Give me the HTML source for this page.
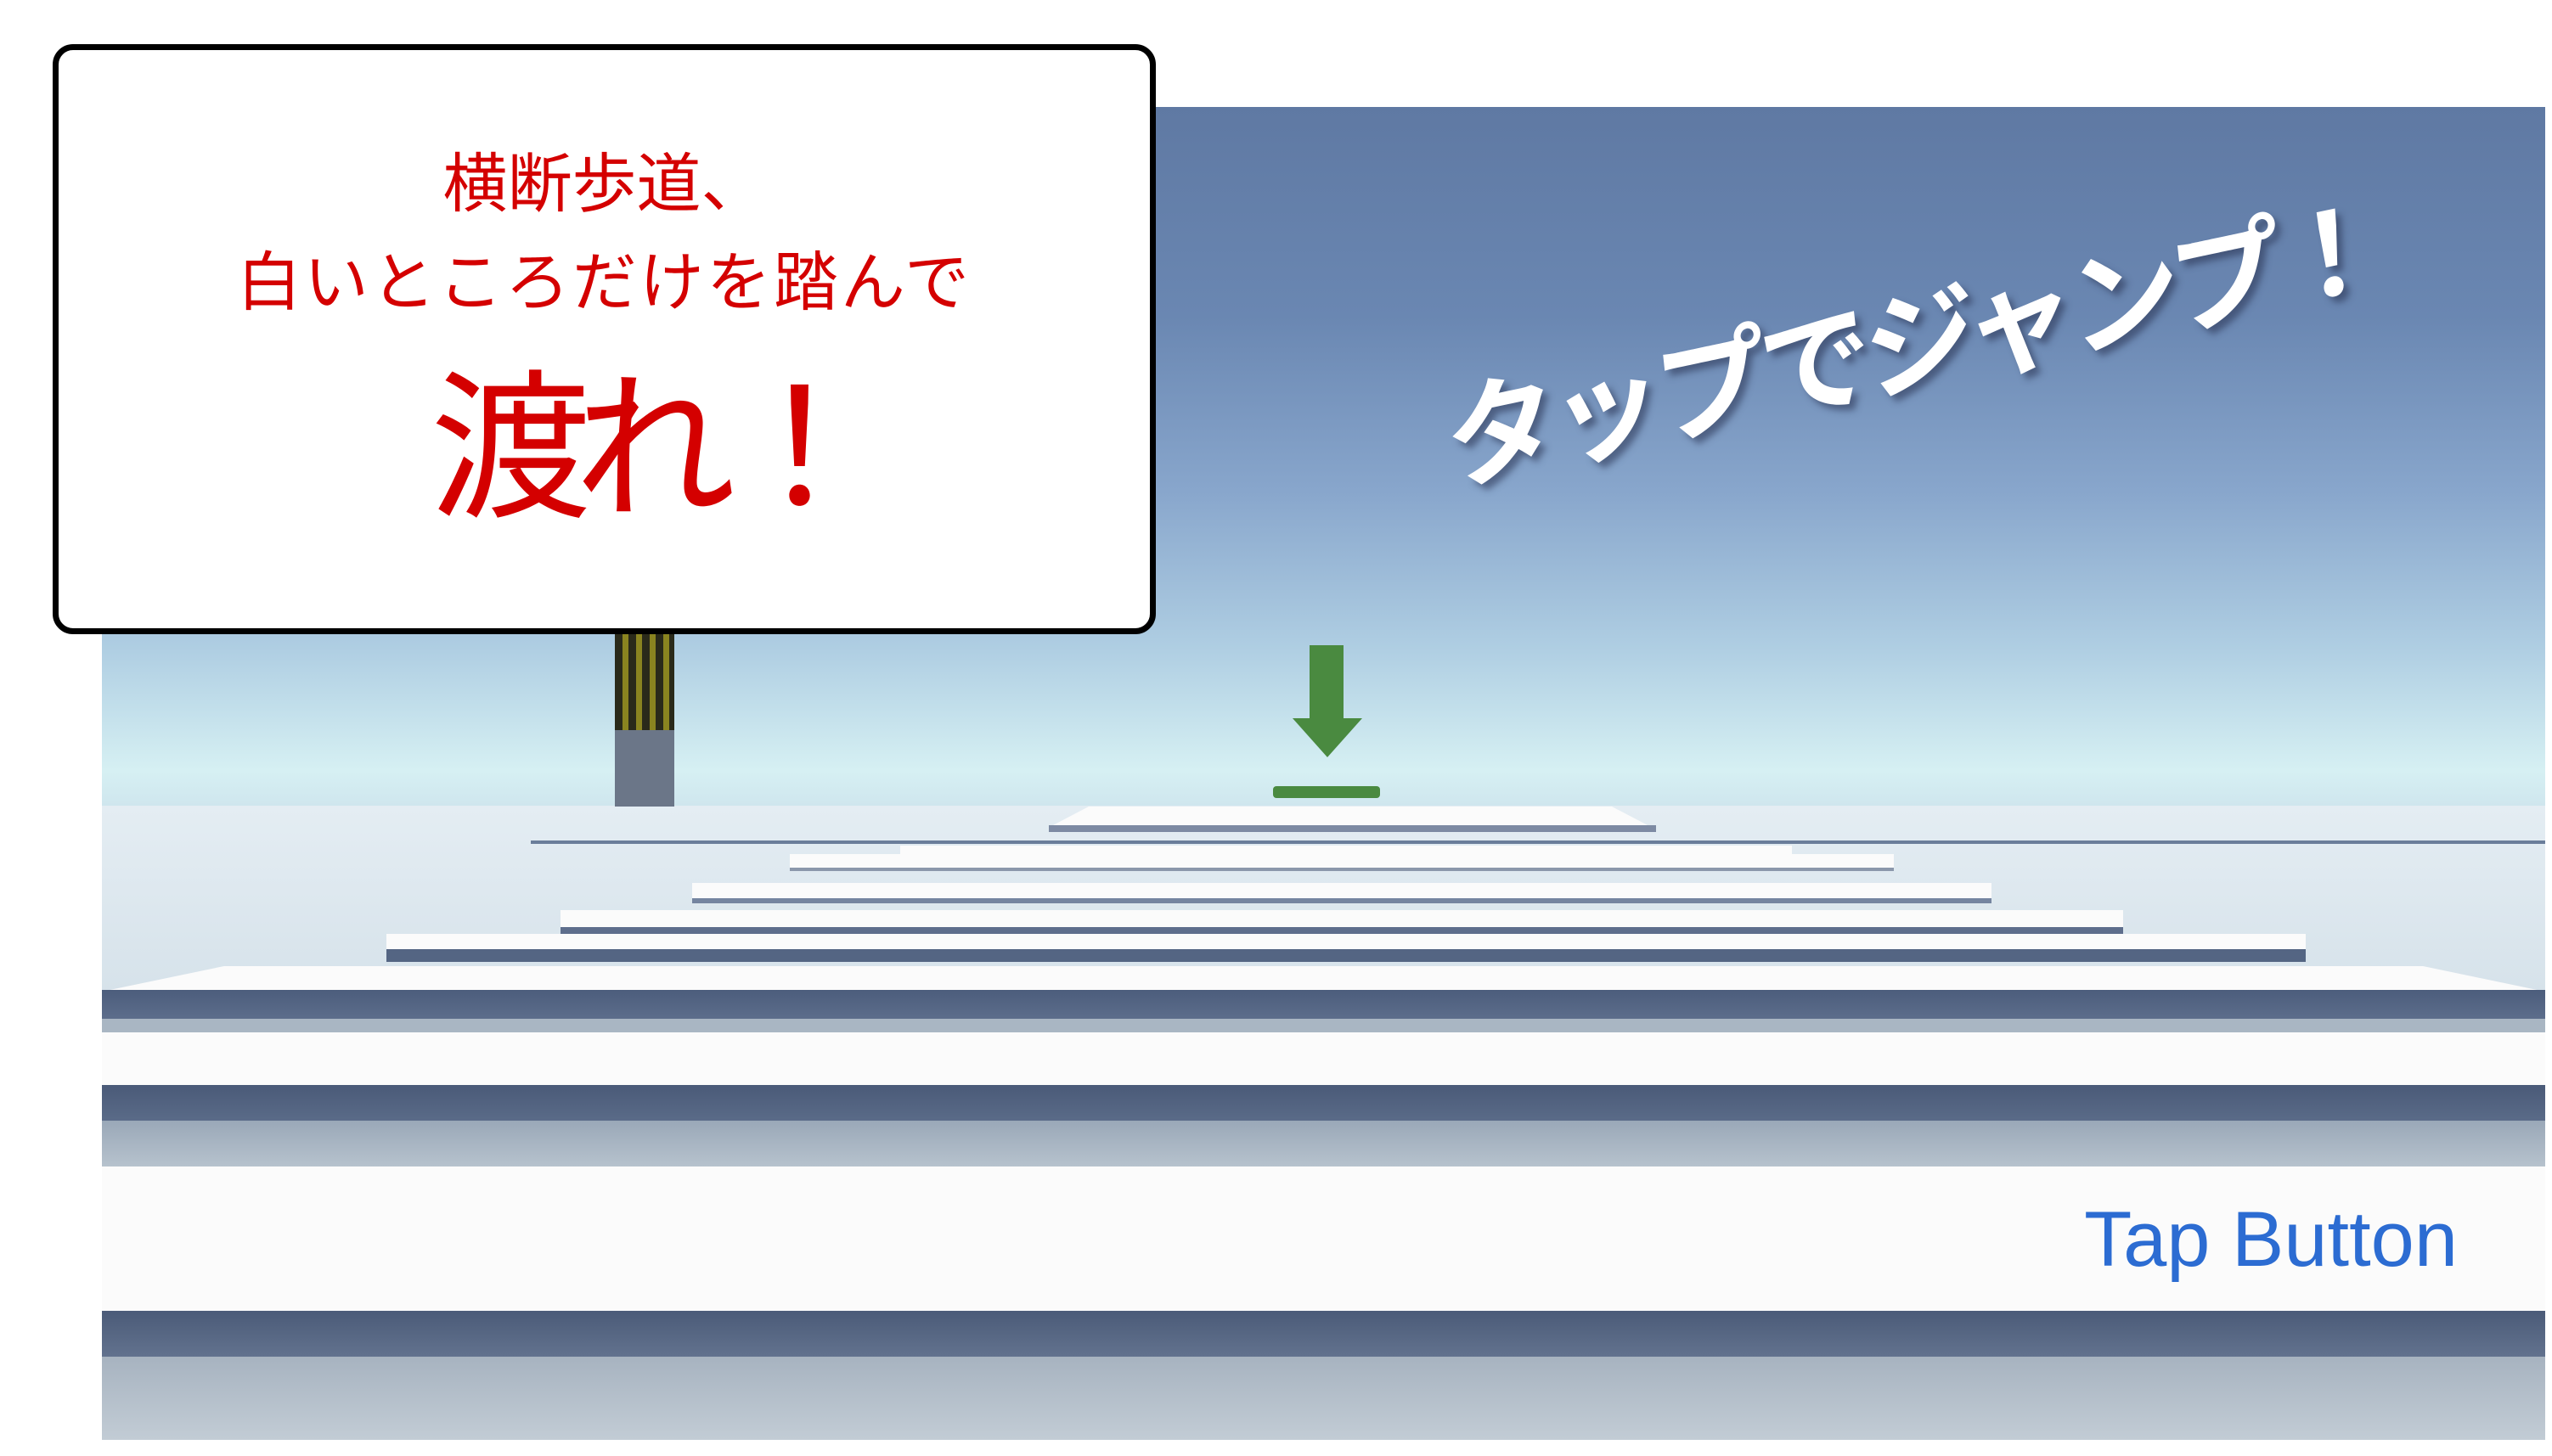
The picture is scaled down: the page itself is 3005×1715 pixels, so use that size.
<!DOCTYPE html>
<html><head><meta charset="utf-8"><style>
html,body{margin:0;padding:0}
body{width:3005px;height:1715px;position:relative;overflow:hidden;background:#fff;font-family:"Liberation Sans","Noto Sans CJK JP",sans-serif}
.a{position:absolute}
#sky{left:120px;top:126px;width:2877px;height:823px;background:linear-gradient(#5f79a3 0%,#6a87b2 30%,#88a6cc 55%,#b0cfe3 78%,#d6f0f3 95%,#cfe6ee 100%)}
#ground{left:120px;top:949px;width:2877px;height:747px;background:linear-gradient(#e4edf3,#d6e2ea 30%,#c9d6e0 60%,#b8c4cf 100%)}
.w{position:absolute;background:#fbfbfb}
.d{position:absolute;background:#4a5a78}
.g{position:absolute;background:#a9b6c3}
</style></head><body>
<div id="sky" class="a"></div>
<div id="ground" class="a"></div>
<div class="w" style="left:1240px;top:950px;width:700px;height:22px;clip-path:polygon(6% 0,94% 0,100% 100%,0 100%)"></div>
<div class="d" style="left:1235px;top:972px;width:715px;height:8px;background:#7d8aa3"></div>
<div class="d" style="left:625px;top:990px;width:2372px;height:4px;background:#6a7d9a"></div>
<div class="w" style="left:1060px;top:996px;width:1050px;height:12px"></div>
<div class="w" style="left:930px;top:1006px;width:1300px;height:16px"></div>
<div class="d" style="left:930px;top:1022px;width:1300px;height:4px;background:#8b97ab"></div>
<div class="w" style="left:815px;top:1040px;width:1530px;height:18px"></div>
<div class="d" style="left:815px;top:1058px;width:1530px;height:6px;background:#7585a0"></div>
<div class="w" style="left:660px;top:1072px;width:1840px;height:20px"></div>
<div class="d" style="left:660px;top:1092px;width:1840px;height:9px;background:#5e6e8c"></div>
<div class="w" style="left:455px;top:1100px;width:2260px;height:20px"></div>
<div class="d" style="left:455px;top:1118px;width:2260px;height:15px;background:#546583"></div>
<div class="w" style="left:120px;top:1138px;width:2877px;height:30px;clip-path:polygon(5% 0,95% 0,100% 100%,0 100%)"></div>
<div class="d" style="left:120px;top:1166px;width:2877px;height:38px;background:linear-gradient(#4c5d7c,#5e6f8d)"></div>
<div class="g" style="left:120px;top:1200px;width:2877px;height:16px"></div>
<div class="w" style="left:120px;top:1216px;width:2877px;height:62px"></div>
<div class="d" style="left:120px;top:1278px;width:2877px;height:42px;background:linear-gradient(#4a5a78,#5a6b88)"></div>
<div class="g" style="left:120px;top:1320px;width:2877px;height:54px;background:linear-gradient(#9aa8b8,#b6c2cd)"></div>
<div class="w" style="left:120px;top:1374px;width:2877px;height:170px"></div>
<div class="d" style="left:120px;top:1544px;width:2877px;height:54px;background:linear-gradient(#4b5b78,#62728e)"></div>
<div class="g" style="left:120px;top:1598px;width:2877px;height:98px;background:linear-gradient(#a7b3c0,#c2ccd5)"></div>
<div class="a" style="left:724px;top:720px;width:70px;height:230px;background:#6b7688"></div>
<div class="a" style="left:724px;top:720px;width:70px;height:140px;background:repeating-linear-gradient(90deg,#2a2a1a 0,#2a2a1a 9px,#8a8420 9px,#8a8420 16px)"></div>
<div class="a" style="left:1542px;top:760px;width:40px;height:92px;background:#4a8a40"></div>
<div class="a" style="left:1522px;top:846px;width:82px;height:46px;background:#4a8a40;clip-path:polygon(0 0,100% 0,50% 100%)"></div>
<div class="a" style="left:1499px;top:926px;width:126px;height:14px;background:#4a8a40;border-radius:4px"></div>
<div class="a" style="left:1690px;top:300px;width:1100px;text-align:center;font-size:134px;font-weight:bold;color:#fff;transform:rotate(-12deg) skewX(-6deg);text-shadow:6px 8px 8px rgba(40,50,80,.55);white-space:nowrap;letter-spacing:-8px">タップでジャンプ！</div>
<div class="a" style="left:62px;top:52px;width:1285px;height:681px;border:7px solid #000;border-radius:24px;background:#fff"></div>
<div class="a" style="left:62px;top:168px;width:1299px;text-align:center;color:#d40000;font-size:76px;line-height:100px">横断歩道、</div>
<div class="a" style="left:62px;top:284px;width:1299px;text-align:center;color:#d40000;font-size:76px;line-height:100px;letter-spacing:3px">白いところだけを踏んで</div>
<div class="a" style="left:162px;top:420px;width:1199px;text-align:center;color:#d40000;font-size:190px;line-height:220px;letter-spacing:-20px">渡れ！</div>
<div class="a" style="left:2400px;top:1405px;width:494px;text-align:right;color:#2c6cd2;font-size:92px;line-height:110px;white-space:nowrap">Tap Button</div>
</body></html>
